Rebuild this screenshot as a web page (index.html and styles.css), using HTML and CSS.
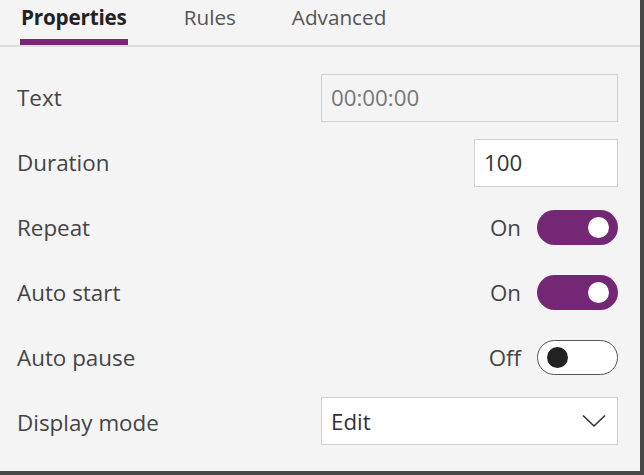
FILE: index.html
```html
<!DOCTYPE html>
<html>
<head>
<meta charset="utf-8">
<link rel="stylesheet" href="styles.css">
</head>
<body>
<div class="frame">
  <div class="tabs">
    <div class="tab active">Properties</div>
    <div class="tab">Rules</div>
    <div class="tab">Advanced</div>
  </div>
  <div class="rows">
    <div class="row">
      <div class="label">Text</div>
      <div class="field wide disabled">00:00:00</div>
    </div>
    <div class="row">
      <div class="label">Duration</div>
      <div class="field narrow">100</div>
    </div>
    <div class="row">
      <div class="label">Repeat</div>
      <div class="control"><span class="state">On</span><span class="toggle on"><span class="knob"></span></span></div>
    </div>
    <div class="row">
      <div class="label">Auto start</div>
      <div class="control"><span class="state">On</span><span class="toggle on"><span class="knob"></span></span></div>
    </div>
    <div class="row">
      <div class="label">Auto pause</div>
      <div class="control"><span class="state">Off</span><span class="toggle off"><span class="knob"></span></span></div>
    </div>
    <div class="row">
      <div class="label">Display mode</div>
      <div class="field wide select"><span>Edit</span>
        <svg class="chev" width="24" height="14" viewBox="0 0 24 14"><path d="M1 1.5 L12 12 L23 1.5" fill="none" stroke="#333" stroke-width="1.6"/></svg>
      </div>
    </div>
  </div>
</div>
</body>
</html>
```
FILE: styles.css
```css
html, body {
  margin: 0;
  padding: 0;
  background: #f4f4f4;
}
body {
  font-family: "Open Sans", "Noto Sans", sans-serif;
  color: #333;
}
.frame {
  width: 640px;
  height: 471px;
  background: #f4f4f4;
  border-right: 4px solid #484848;
  border-bottom: 4px solid #484848;
  overflow: hidden;
}
.tabs {
  display: flex;
  gap: 56px;
  padding-left: 20px;
  height: 45px;
  border-bottom: 2px solid #dcdcdc;
  box-sizing: content-box;
}
.tab {
  font-size: 20.7px;
  color: #555;
  line-height: 28px;
  padding-top: 3px;
  height: 35px;
  box-sizing: border-box;
}
.tab.last {
  letter-spacing: 0.3px;
}
.tab.active {
  font-weight: 700;
  color: #222;
  border-bottom: 6px solid #742774;
  height: 45px;
  letter-spacing: -0.2px;
  padding-left: 1px;
  padding-right: 1px;
}
.rows {
  padding: 18px 22px 0 17px;
}
.row {
  height: 65px;
  display: flex;
  align-items: center;
  justify-content: space-between;
}
.label {
  font-size: 22.4px;
  color: #444;
}
.field {
  height: 48px;
  box-sizing: border-box;
  border: 1.5px solid #d0d0d0;
  background: #fff;
  font-size: 22.3px;
  color: #333;
  display: flex;
  align-items: center;
  padding-left: 9px;
}
.field.wide { width: 297px; }
.field.narrow { width: 144px; }
.field.disabled {
  background: #f4f4f4;
  color: #777;
}
.field.select {
  justify-content: space-between;
  padding-right: 11px;
  margin-top: -3px;
}
.control {
  display: flex;
  align-items: center;
  gap: 16px;
}
.state {
  font-size: 22.3px;
  color: #444;
}
.toggle {
  width: 81px;
  height: 35px;
  border-radius: 18px;
  box-sizing: border-box;
  display: flex;
  align-items: center;
}
.toggle.on {
  background: #742774;
  justify-content: flex-end;
  padding-right: 9px;
}
.toggle.off {
  background: #fff;
  border: 1.5px solid #555;
  padding-left: 9px;
}
.knob {
  width: 21px;
  height: 21px;
  border-radius: 50%;
}
.toggle.on .knob { background: #fff; }
.toggle.off .knob { background: #222; }
```
